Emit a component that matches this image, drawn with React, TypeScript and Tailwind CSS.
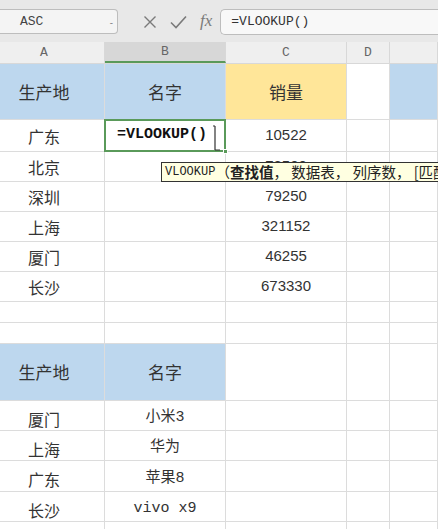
import React from "react";

const CJK = "font-['Noto_Sans_CJK_SC',sans-serif]";
const MONO = "font-['Liberation_Mono','Noto_Sans_CJK_SC',monospace]";
const NUM = "font-['Liberation_Sans',sans-serif]";

// column widths: A (partly scrolled off), B, C, D, E
const COLS = ["w-[105px]", "w-[121px]", "w-[121px]", "w-[43px]", "flex-1"];

function Cell({
  i,
  bg = "bg-white",
  className = "",
  children,
}: {
  i: number;
  bg?: string;
  className?: string;
  children?: React.ReactNode;
}) {
  return (
    <div
      className={`${COLS[i]} ${bg} shrink-0 flex items-center justify-center border-r border-b border-[#dcdcdc] text-[#333] ${
        i === 0 ? "pr-[16px]" : ""
      } ${className}`}
    >
      {children}
    </div>
  );
}

function Row({ h, children }: { h: string; children: React.ReactNode }) {
  return <div className={`flex ${h}`}>{children}</div>;
}

const sales: [string, string][] = [
  ["北京", "78500"],
  ["深圳", "79250"],
  ["上海", "321152"],
  ["厦门", "46255"],
  ["长沙", "673330"],
];

const lookup: [string, string, string][] = [
  ["厦门", "小米3", "h-[30px]"],
  ["上海", "华为", "h-[30px]"],
  ["广东", "苹果8", "h-[31px]"],
  ["长沙", "vivo x9", "h-[30px]"],
];

export default function App() {
  return (
    <div className="relative w-[438px] h-[529px] overflow-hidden bg-white select-none">
      {/* formula bar */}
      <div className="flex items-center h-[42px] bg-[#e8e8e8] pt-[1px]">
        <div className="flex items-center w-[118px] h-[25px] bg-[#f4f4f4] border border-[#bdbdbd] rounded-r-[4px] border-l-0 pl-[20px] pr-[4px]">
          <span className={`${MONO} text-[13px] text-[#444] flex-1`}>ASC</span>
          <span className="text-[10px] text-[#888] leading-none">-</span>
        </div>
        <div className="flex items-center gap-[13px] ml-[25px] text-[#777]">
          <svg width="14" height="14" viewBox="0 0 14 14" fill="none" stroke="#7a7a7a" strokeWidth="1.4">
            <path d="M1.5 1.5l11 11M12.5 1.5l-11 11" />
          </svg>
          <svg width="17" height="14" viewBox="0 0 17 14" fill="none" stroke="#7a7a7a" strokeWidth="1.6">
            <path d="M1 7.5l5 5L16 1.5" />
          </svg>
          <span className="font-['Liberation_Serif',serif] italic text-[17px] text-[#7a7a7a] leading-none -mt-[3px]">fx</span>
        </div>
        <div className="flex items-center ml-[8px] flex-1 h-[26px] bg-[#f8f8f8] border border-[#bdbdbd] border-r-0 rounded-l-[5px] pl-[10px]">
          <span className={`${MONO} text-[13px] text-[#333]`}>=VLOOKUP()</span>
        </div>
      </div>

      {/* column headers */}
      <div className="flex h-[22px] bg-[#efefef] border-b border-[#d8d8d8]">
        {["A", "B", "C", "D", ""].map((c, i) => (
          <div
            key={i}
            className={`${COLS[i]} shrink-0 flex items-center justify-center border-r border-[#d8d8d8] ${MONO} text-[13px] text-[#666] ${
              i === 0 ? "pr-[16px]" : ""
            } ${i === 1 ? "bg-[#d7d7d7] border-b-2 border-b-[#5a9a5a]" : ""}`}
          >
            {c}
          </div>
        ))}
      </div>

      {/* table 1 */}
      <Row h="h-[56px]">
        <Cell i={0} bg="bg-[#bdd7ee]" className={`${CJK} text-[17px]`}>生产地</Cell>
        <Cell i={1} bg="bg-[#bdd7ee]" className={`${CJK} text-[17px]`}>名字</Cell>
        <Cell i={2} bg="bg-[#ffe699]" className={`${CJK} text-[17px]`}>销量</Cell>
        <Cell i={3} />
        <Cell i={4} bg="bg-[#bdd7ee]" />
      </Row>
      <Row h="h-[32px]">
        <Cell i={0} className={`${CJK} text-[16px]`}>广东</Cell>
        <Cell i={1} className="relative">
          <div className="absolute inset-[-1px] border-2 border-[#5a9a5a]" />
          <div className="absolute right-[-3px] bottom-[-3px] w-[5px] h-[5px] bg-[#5a9a5a] border border-white" />
          <span className={`${MONO} font-bold text-[15px] text-[#111] -ml-[6px]`}>=VLOOKUP()</span>
          <svg className="absolute left-[106px] top-[5px]" width="10" height="26" viewBox="0 0 10 26" fill="none" stroke="#333" strokeWidth="1.2">
            <path d="M2 1h2M4 1v24M4 25h5" />
          </svg>
        </Cell>
        <Cell i={2} className={`${NUM} text-[15px]`}>10522</Cell>
        <Cell i={3} />
        <Cell i={4} />
      </Row>
      {sales.map(([city, n]) => (
        <Row key={city} h="h-[30px]">
          <Cell i={0} className={`${CJK} text-[16px]`}>{city}</Cell>
          <Cell i={1} />
          <Cell i={2} className={`${NUM} text-[15px]`}>{n}</Cell>
          <Cell i={3} />
          <Cell i={4} />
        </Row>
      ))}
      {[0, 1].map((k) => (
        <Row key={k} h="h-[21px]">
          {[0, 1, 2, 3, 4].map((i) => (
            <Cell key={i} i={i} />
          ))}
        </Row>
      ))}

      {/* table 2 */}
      <Row h="h-[57px]">
        <Cell i={0} bg="bg-[#bdd7ee]" className={`${CJK} text-[17px]`}>生产地</Cell>
        <Cell i={1} bg="bg-[#bdd7ee]" className={`${CJK} text-[17px]`}>名字</Cell>
        <Cell i={2} />
        <Cell i={3} />
        <Cell i={4} />
      </Row>
      {lookup.map(([city, name, h]) => (
        <Row key={city} h={h}>
          <Cell i={0} className={`${CJK} text-[16px] pt-[6px]`}>{city}</Cell>
          <Cell i={1} className={`${MONO} text-[15px] pt-[6px]`}>{name}</Cell>
          <Cell i={2} />
          <Cell i={3} />
          <Cell i={4} />
        </Row>
      ))}
      <Row h="h-[30px]">
        {[0, 1, 2, 3, 4].map((i) => (
          <Cell key={i} i={i} />
        ))}
      </Row>

      {/* function tooltip */}
      <div className="absolute left-[161px] top-[162px] h-[20px] pl-[3px] pr-[6px] flex items-center whitespace-nowrap bg-[#ffffe1] border border-[#333] text-[#222] leading-none">
        <span className={`${MONO} text-[12px]`}>VLOOKUP </span>
        <span className={`${CJK} text-[14.5px]`}>
          （<b>查找值</b>， 数据表， 列序数， [匹配条件]）
        </span>
      </div>
    </div>
  );
}
